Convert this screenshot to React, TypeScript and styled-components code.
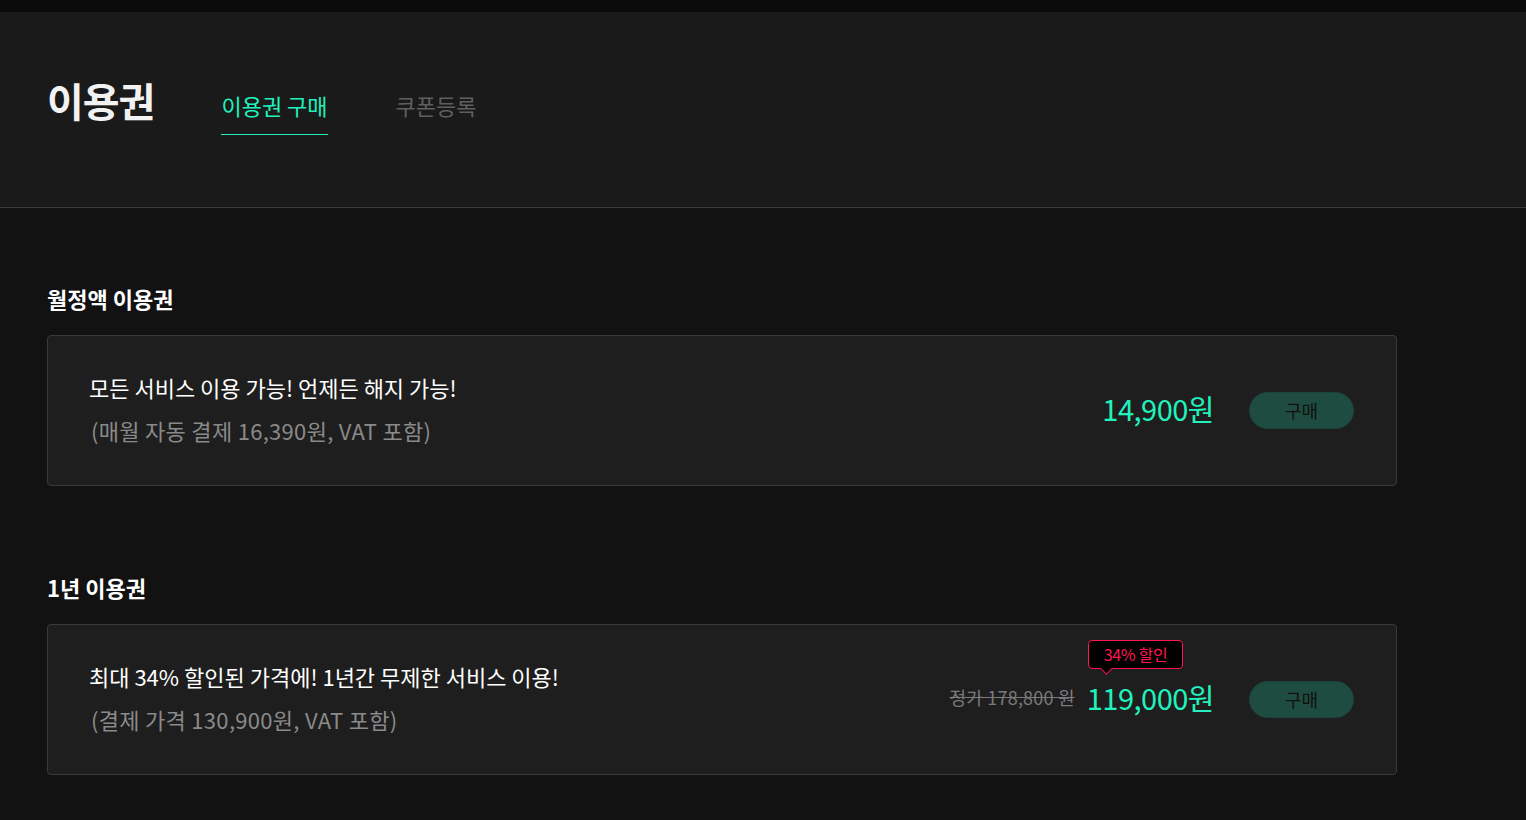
import React from "react";
import styled, { createGlobalStyle } from "styled-components";

const GlobalStyle = createGlobalStyle`
  html, body {
    margin: 0;
    padding: 0;
    background: #121212;
  }
  body {
    font-family: "Noto Sans CJK KR", "Noto Sans", sans-serif;
    color: #ffffff;
    min-height: 820px;
  }
  * { box-sizing: border-box; }
`;

const TopBar = styled.div`
  height: 12px;
  background: #0b0b0b;
`;

const Header = styled.header`
  display: flex;
  align-items: flex-start;
  height: 196px;
  padding: 60px 0 0 47px;
  background: #1a1a1a;
  border-bottom: 1px solid #3c3c3c;
`;

const PageTitle = styled.h1`
  margin: 0 67px 0 0;
  font-size: 40px;
  line-height: 56px;
  font-weight: 700;
  letter-spacing: -1px;
  color: #f2f2f2;
`;

const Tabs = styled.nav`
  display: flex;
  gap: 68px;
  margin-top: 18px;
`;

const Tab = styled.a<{ $active?: boolean }>`
  display: block;
  font-size: 22px;
  line-height: 30px;
  padding-bottom: 14px;
  color: ${(p) => (p.$active ? "#21f2bd" : "#5f5f5f")};
  border-bottom: 1px solid ${(p) => (p.$active ? "#21f2bd" : "transparent")};
  text-decoration: none;
  cursor: pointer;
`;

const Main = styled.main`
  padding: 75px 0 40px 47px;
`;

const Section = styled.section`
  width: 1350px;
  & + & {
    margin-top: 86px;
  }
`;

const SectionTitle = styled.h2`
  margin: 0 0 22px;
  font-size: 22px;
  line-height: 30px;
  font-weight: 700;
  color: #ffffff;
`;

const Card = styled.div`
  display: flex;
  align-items: center;
  justify-content: space-between;
  height: 151px;
  padding: 0 42px 4px 41px;
  background: #1e1e1e;
  border: 1px solid #3a3a3a;
  border-radius: 4px;
`;

const Info = styled.div`
  display: flex;
  flex-direction: column;
  gap: 11px;
`;

const InfoTitle = styled.div`
  font-size: 22px;
  line-height: 32px;
  color: #ffffff;
`;

const InfoSub = styled.div`
  font-size: 22px;
  line-height: 32px;
  color: #8a8a8a;
  letter-spacing: 0.3px;
  padding-left: 2px;
`;

const PriceArea = styled.div`
  display: flex;
  align-items: center;
  margin-top: 4px;
`;

const PriceBox = styled.div`
  position: relative;
  display: flex;
  align-items: center;
  gap: 12px;
  margin-right: 35px;
  margin-bottom: 6px;
`;

const OldPrice = styled.span`
  font-size: 18px;
  line-height: 26px;
  color: #7a7a7a;
  text-decoration: line-through;
  letter-spacing: 0.2px;
`;

const Price = styled.span`
  font-size: 29px;
  line-height: 38px;
  color: #21f2bd;
  letter-spacing: -0.5px;
`;

const Badge = styled.span`
  position: absolute;
  right: 31px;
  top: -38px;
  width: 95px;
  height: 29px;
  display: flex;
  align-items: center;
  justify-content: center;
  background: #000000;
  border: 1px solid #ff1552;
  border-radius: 4px;
  color: #ff1552;
  font-size: 16px;
  letter-spacing: -0.3px;

  &::after {
    content: "";
    position: absolute;
    left: 13px;
    bottom: -5px;
    width: 8px;
    height: 8px;
    background: #000000;
    border-right: 1px solid #ff1552;
    border-bottom: 1px solid #ff1552;
    transform: rotate(45deg);
  }
`;

const BuyButton = styled.button`
  width: 105px;
  height: 37px;
  border-radius: 19px;
  border: 1px solid #1c4438;
  background: #1f4c40;
  color: #111111;
  font-family: "Noto Sans CJK KR", "Noto Sans", sans-serif;
  font-size: 18px;
  line-height: 1;
  cursor: pointer;
  padding: 0 0 2px;
`;

export default function App() {
  return (
    <>
      <GlobalStyle />
      <TopBar />
      <Header>
        <PageTitle>이용권</PageTitle>
        <Tabs>
          <Tab $active>이용권 구매</Tab>
          <Tab>쿠폰등록</Tab>
        </Tabs>
      </Header>
      <Main>
        <Section>
          <SectionTitle>월정액 이용권</SectionTitle>
          <Card>
            <Info>
              <InfoTitle>모든 서비스 이용 가능! 언제든 해지 가능!</InfoTitle>
              <InfoSub>(매월 자동 결제 16,390원, VAT 포함)</InfoSub>
            </Info>
            <PriceArea>
              <PriceBox>
                <Price>14,900원</Price>
              </PriceBox>
              <BuyButton>구매</BuyButton>
            </PriceArea>
          </Card>
        </Section>
        <Section>
          <SectionTitle>1년 이용권</SectionTitle>
          <Card>
            <Info>
              <InfoTitle>최대 34% 할인된 가격에! 1년간 무제한 서비스 이용!</InfoTitle>
              <InfoSub>(결제 가격 130,900원, VAT 포함)</InfoSub>
            </Info>
            <PriceArea>
              <PriceBox>
                <OldPrice>정가 178,800 원</OldPrice>
                <Price>119,000원</Price>
                <Badge>34% 할인</Badge>
              </PriceBox>
              <BuyButton>구매</BuyButton>
            </PriceArea>
          </Card>
        </Section>
      </Main>
    </>
  );
}
